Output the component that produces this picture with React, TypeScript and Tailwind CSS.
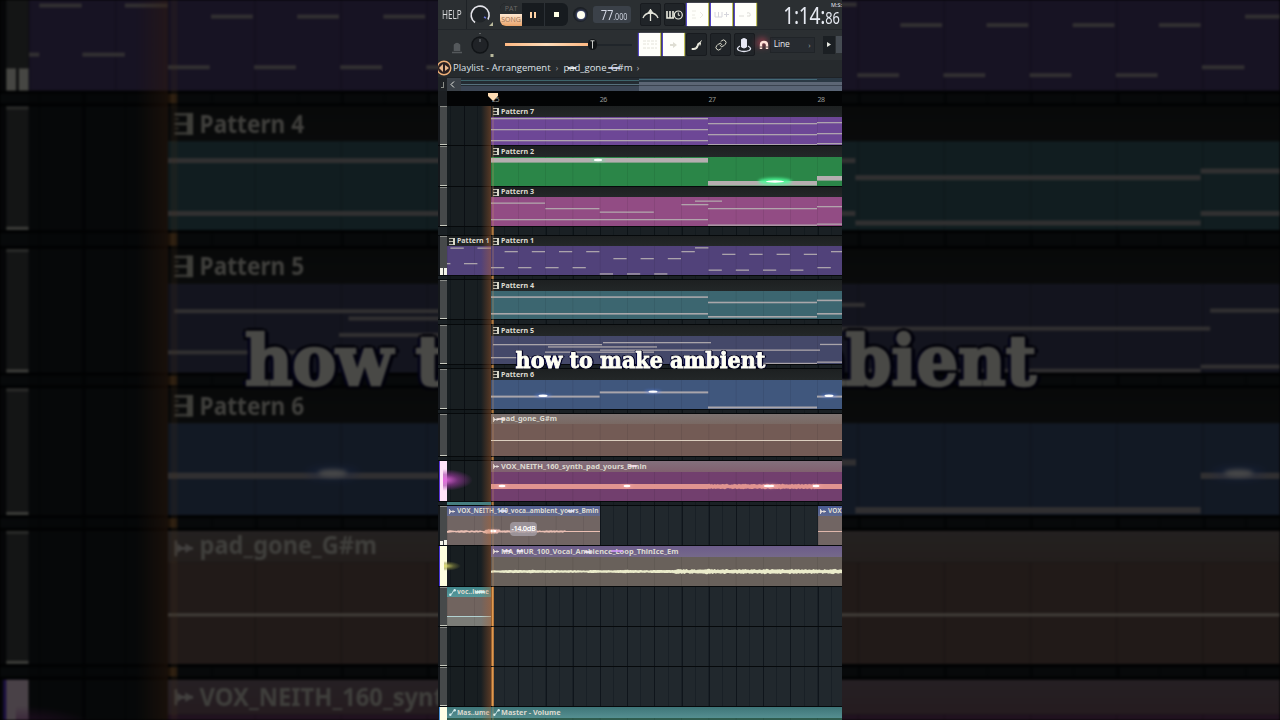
import React from 'react';
import { Link } from 'lucide-react';

type Note = [x: number, y: number, width: number, height?: number];
type Glow = [x: number, y: number, width: number];

interface Clip {
  label: string;
  labelWidth: number;
  kind: 'pattern' | 'audio' | 'automation';
  x: number;
  width: number;
  head: string;
  body: string;
  notes?: Note[];
  noteColor?: string;
  glows?: Glow[];
  glowColor?: string;
  wave?: { y: number; color: string; amp: (x: number) => number };
}

interface Track {
  head: number;
  body: number;
  gap: number;
  clips: Clip[];
  meter?: 'pink' | 'yellow' | 'white' | 'peak' | 'small';
}

const BAR = 108.8;
const STEP = 13.6;
const START = 44;
const REST = 351;

const DARK_HEAD = 'bg-gradient-to-b from-[#1d2021] to-[#232728]';

// Repeats one note every two steps
const run = (from: number, count: number, y: number): Note[] =>
  Array.from({ length: count }, (_, i) => [from + i * STEP * 2, y, STEP - 0.4]);

// Stable noise in 0..1 for the wave forms
const noise = (x: number) => {
  const n = Math.sin(x * 127.1) * 43758.5453;
  return n - Math.floor(n);
};

const pattern = (
  label: string,
  body: string,
  notes: Note[],
  extra: Partial<Clip> = {}
): Clip => ({
  label,
  labelWidth: 33,
  kind: 'pattern',
  x: START,
  width: REST,
  head: DARK_HEAD,
  body,
  notes,
  ...extra,
});

const TRACKS: Track[] = [
  {
    head: 11,
    body: 28,
    gap: 1,
    clips: [
      pattern('Pattern 7', 'bg-[#6d4796]', [
        [0, 1, 217], [0, 12, 217], [0, 23, 217],
        [217, 6, 109], [217, 17, 109], [217, 27, 109],
        [326, 5, 25], [326, 16, 25], [326, 26, 25],
      ]),
    ],
  },
  {
    head: 11,
    body: 29,
    gap: 1,
    clips: [
      pattern(
        'Pattern 2',
        'bg-[#2b8648]',
        [[0, 1, 217, 4.6], [217, 24, 109, 4.6], [326, 19, 25, 4.6]],
        { glows: [[107, 3, 11], [284, 24.5, 24]], glowColor: '#4dff9a' }
      ),
    ],
  },
  {
    head: 10,
    body: 29,
    gap: 10,
    clips: [
      pattern('Pattern 3', 'bg-[#924c84]', [
        [0, 5.5, 54], [54.4, 11, 54], [108.8, 14.5, 54], [0, 22, 217],
        [190.4, 7, 27], [204, 3.5, 27], [217, 11, 109], [217, 27.5, 109],
        [326, 9, 25], [326, 26.5, 25],
      ]),
    ],
  },
  {
    head: 10,
    body: 29,
    gap: 5,
    meter: 'peak',
    clips: [
      pattern(
        'Pattern 1',
        'bg-[#51427a]',
        [[3.4, 1.5, 13.4], [30.4, 1.5, 13.6], [0, 17, 3.4], [17, 17, 13.4]],
        { x: 0, width: 44, labelWidth: 32.5 }
      ),
      pattern('Pattern 1', 'bg-[#51427a]', [
        ...run(0, 4, 21), ...run(13.6, 4, 5),
        ...run(BAR, 3, 27.3), ...run(122.4, 3, 12),
        [190.4, 5, 13.4], [204, 1.2, 13.4],
        ...run(217.6, 4, 23.5), ...run(231.2, 4, 7.7),
        [326.4, 21, 13.4], [340, 5, 12],
      ]),
    ],
  },
  {
    head: 11,
    body: 28,
    gap: 6,
    clips: [
      pattern('Pattern 4', 'bg-[#3c6670]', [
        [0, 5.3, 217, 1.6], [0, 22, 217, 1.6], [217, 10.7, 109, 1.6],
        [217, 25, 109, 1.6], [326, 8.6, 25, 1.6], [326, 22, 25, 1.6],
      ]),
    ],
  },
  {
    head: 11,
    body: 28,
    gap: 5,
    clips: [
      pattern('Pattern 5', 'bg-[#444869]', [
        [2, 8, 109], [112, 6, 108], [57, 10.3, 109], [54, 15.5, 109],
        [109, 13.5, 220], [0, 21, 54], [329, 7.8, 22], [217, 26.8, 109], [326, 25.5, 25],
      ]),
    ],
  },
  {
    head: 11,
    body: 29,
    gap: 5,
    clips: [
      pattern(
        'Pattern 6',
        'bg-[#40577d]',
        [[0, 15.6, 108.6, 2], [108.8, 11.4, 108.4, 2], [217, 26.5, 109, 2], [326, 15.6, 25, 2]],
        { glows: [[52, 15.8, 12], [162, 11.6, 12], [338, 15.8, 12]], glowColor: '#5f8cff' }
      ),
    ],
  },
  {
    head: 10,
    body: 32,
    gap: 5,
    clips: [
      {
        label: 'pad_gone_G#m',
        labelWidth: 56,
        kind: 'audio',
        x: START,
        width: REST,
        head: 'bg-gradient-to-b from-[#7d7371] to-[#796862]',
        body: 'bg-[#735b55]',
        notes: [[0, 16, 351, 1]],
        noteColor: '#e8dccb',
      },
    ],
  },
  {
    head: 11,
    body: 29,
    gap: 5,
    meter: 'pink',
    clips: [
      {
        label: 'VOX_NEITH_160_synth_pad_yours_Bmin',
        labelWidth: 145.5,
        kind: 'audio',
        x: START,
        width: REST,
        head: 'bg-gradient-to-b from-[#83707c] to-[#80606f]',
        body: 'bg-[#723f6e]',
        glows: [[11, 14, 9], [136, 14, 9], [278, 14, 14], [325, 14, 9]],
        glowColor: '#ffb3b8',
        wave: {
          y: 14.5,
          color: '#e09490',
          amp: (x) => (x > 217 && x < 326 ? 1.8 + noise(x) * 1 : 2.6),
        },
      },
    ],
  },
  {
    head: 10,
    body: 29,
    gap: 1,
    meter: 'small',
    clips: [
      {
        label: 'VOX_NEITH_160_voca..ambient_yours_Bmin',
        labelWidth: 141.5,
        kind: 'audio',
        x: 0,
        width: 153,
        head: 'bg-gradient-to-b from-[#525f91] to-[#666b8c]',
        body: 'bg-[#716563]',
        glows: [[46, 15, 9]],
        glowColor: '#ffb3b8',
        wave: {
          y: 15.5,
          color: '#ecc0b4',
          amp: (x) => (x > 118 ? 0.5 : 0.5 + noise(x) * 0.9 + (x > 38 && x < 54 ? 1 : 0)),
        },
      },
      {
        label: 'VOX',
        labelWidth: 13.5,
        kind: 'audio',
        x: 370.5,
        width: 25,
        head: 'bg-gradient-to-b from-[#4a5a92] to-[#5f6a90]',
        body: 'bg-[#716563]',
        notes: [[0, 15, 25, 1]],
        noteColor: '#ecc0b4',
      },
    ],
  },
  {
    head: 11,
    body: 29,
    gap: 1,
    meter: 'yellow',
    clips: [
      {
        label: 'MA_MUR_100_Vocal_Ambience_Loop_ThinIce_Em',
        labelWidth: 177.5,
        kind: 'audio',
        x: START,
        width: REST,
        head: 'bg-gradient-to-b from-[#6c5c8a] to-[#75698a]',
        body: 'bg-[#69615b]',
        wave: {
          y: 14.5,
          color: '#ebeccb',
          amp: (x) => {
            const loud = x > 185;
            return (loud ? 1.1 : 0.8) + noise(x) * (loud ? 1.3 : 0.5) + noise(Math.floor(x / 9)) * 0.5;
          },
        },
      },
    ],
  },
  {
    head: 10,
    body: 29,
    gap: 1,
    clips: [
      {
        label: 'voc..lume',
        labelWidth: 32,
        kind: 'automation',
        x: 0,
        width: 44,
        head: 'bg-gradient-to-b from-[#3f8488] to-[#57989b]',
        body: 'bg-gradient-to-b from-[#71645f] from-66% to-[#7b7c77] to-66%',
        notes: [[0, 19, 44, 1]],
        noteColor: '#b8dcdc',
      },
    ],
  },
  { head: 10, body: 29, gap: 1, clips: [] },
  { head: 10, body: 29, gap: 1, clips: [] },
  {
    head: 11,
    body: 2,
    gap: 0,
    meter: 'white',
    clips: [
      {
        label: 'Mas..ume',
        labelWidth: 32.5,
        kind: 'automation',
        x: 0,
        width: 44,
        head: 'bg-gradient-to-b from-[#3e7578] to-[#558f91]',
        body: 'bg-[#2f5c4e]',
      },
      {
        label: 'Master - Volume',
        labelWidth: 59.5,
        kind: 'automation',
        x: START,
        width: REST,
        head: 'bg-gradient-to-b from-[#3e7578] to-[#558f91]',
        body: 'bg-[#2f5c4e]',
      },
    ],
  },
];

// The first row's header lies above the top edge, so it carries no label
const BACKDROP_TRACKS: Track[] = TRACKS.slice(3, 9).map((track, i) =>
  i === 0 ? { ...track, clips: track.clips.map((clip) => ({ ...clip, label: '' })) } : track
);

// Small bright streaks over the labels: x, y, width, colour
const STREAKS: [number, number, number, string][] = [
  [134, 68, 9, '#ffffff'],
  [176, 68, 12, '#dfe4ff'],
  [63, 419, 8, '#ffe9e4'],
  [195, 466, 8, '#ffe4f2'],
  [65, 511, 8, '#e6e9ff'],
  [133, 511, 7, '#e6e9ff'],
  [69, 551, 8, '#f4ecff'],
  [82, 551, 7, '#f4ecff'],
  [150, 552, 7, '#f4ecff'],
  [179, 551, 12, '#d79bff'],
  [42, 592, 10, '#dcffff'],
];

const ClipIcon: React.FC<{ kind: Clip['kind'] }> = ({ kind }) => {
  if (kind === 'pattern') {
    return (
      <svg className="w-[6px] h-[7px] shrink-0" viewBox="0 0 6 7">
        <path d="M0 .5H5M0 3.5H5M0 6.5H5" stroke="#c9c9bd" strokeWidth=".9" />
        <path d="M0 2H1.5M0 5H1.5" stroke="#8d8d84" strokeWidth=".6" />
        <rect x="4" y="0" width="2" height="7" fill="#d8d8c8" />
      </svg>
    );
  }
  if (kind === 'audio') {
    return (
      <svg className="w-[6px] h-[7px] shrink-0" viewBox="0 0 6 7">
        <path d="M.5 1V6M.5 3.5H6" stroke="#e6e0dc" strokeWidth=".9" />
        <path d="M1 2L3 3.5L1 5ZM3.5 2L6 3.5L3.5 5Z" fill="#e6e0dc" />
      </svg>
    );
  }
  return (
    <svg className="w-[7px] h-[7px] shrink-0 -mr-px" viewBox="0 0 7 7">
      <path d="M1.3 5.7Q3 5.2 3.5 3.5T5.7 1.3" stroke="#d6eeee" fill="none" />
      <circle cx="1.3" cy="5.7" r="1.2" fill="#d6eeee" />
      <circle cx="5.7" cy="1.3" r="1.2" fill="#d6eeee" />
    </svg>
  );
};

const wavePath = (wave: NonNullable<Clip['wave']>, width: number) => {
  const xs = Array.from({ length: Math.floor(width) + 1 }, (_, i) => i);
  const top = xs.map((x) => `${x} ${(wave.y - wave.amp(x)).toFixed(2)}`);
  const bottom = xs.map((x) => `${x} ${(wave.y + wave.amp(x + 2)).toFixed(2)}`).reverse();
  return `M${[...top, ...bottom].join('L')}Z`;
};

const ClipView: React.FC<{ clip: Clip; track: Track; offset: number }> = ({
  clip,
  track,
  offset,
}) => (
  <div className="flex flex-col shrink-0" style={{ marginLeft: offset, width: clip.width }}>
    <div
      className={`flex items-center shrink-0 gap-[2px] pl-[2px] ${clip.head}`}
      style={{ height: track.head }}
    >
      <ClipIcon kind={clip.kind} />
      {clip.label && (
        <svg className="h-[10px] shrink-0 overflow-visible" style={{ width: clip.labelWidth }}>
          <text
            x="0"
            y="7.3"
            textLength={clip.labelWidth}
            lengthAdjust="spacingAndGlyphs"
            className="fill-[#dcdad0] text-[7.8px] font-bold font-['Noto_Sans',sans-serif]"
          >
            {clip.label}
          </text>
        </svg>
      )}
    </div>
    <svg
      className={`block shrink-0 ${clip.body}`}
      style={{ width: clip.width, height: track.body }}
      viewBox={`0 0 ${clip.width} ${track.body}`}
    >
      {Array.from({ length: Math.ceil(clip.width / (STEP * 2)) }, (_, i) => (
        <rect key={i} x={i * STEP * 2} width=".6" height={track.body} fill="#000" opacity=".12" />
      ))}
      {clip.notes?.map(([x, y, w, h = 1.3], i) => (
        <rect
          key={i}
          x={x}
          y={y}
          width={w}
          height={h}
          fill={clip.noteColor ?? '#b5aeb0'}
          opacity={h > 4 ? 1 : 0.9}
        />
      ))}
      {clip.wave && <path d={wavePath(clip.wave, clip.width)} fill={clip.wave.color} />}
      {clip.glows?.map(([x, y, w], i) => (
        <g key={i}>
          <ellipse
            cx={x}
            cy={y}
            rx={w * 0.7}
            ry={w * 0.15}
            fill={clip.glowColor}
            opacity={w > 20 ? 0.9 : 0.45}
            className="blur-[1.5px]"
          />
          <ellipse cx={x} cy={y} rx={w * 0.38} ry="1.2" fill="#fff" className="blur-[0.6px]" />
        </g>
      ))}
    </svg>
  </div>
);

const Meter: React.FC<{ kind?: Track['meter'] }> = ({ kind }) => {
  if (kind === 'pink') {
    return (
      <div className="relative w-[7px] ml-px h-full bg-[#ffe3f7] shadow-[-1px_0_0_#5a35d8]">
        <div className="absolute left-[3px] top-[8px] w-[30px] h-[22px] bg-[radial-gradient(ellipse_at_left,#e86be0_0%,#a53ba899_35%,transparent_70%)]" />
      </div>
    );
  }
  if (kind === 'yellow') {
    return (
      <div className="relative w-[7px] ml-px h-full bg-[#ffffdf] shadow-[-1px_0_0_#4a35d8]">
        <div className="absolute left-[4px] inset-y-0 my-auto w-[17px] h-[10px] bg-[radial-gradient(ellipse_at_left,#e0e06e_0%,#8c8d4088_40%,transparent_70%)]" />
      </div>
    );
  }
  if (kind === 'white') {
    return <div className="w-[7px] ml-px h-full bg-[#ffffe6] shadow-[-1px_0_0_#4a8fd8]" />;
  }
  return (
    <div className="flex flex-col justify-between w-[7px] ml-px h-full bg-[#46494a]">
      <div className="h-px bg-[#8a8c88]" />
      {kind ? (
        <div className="flex items-end gap-px">
          <div className={`w-[3px] bg-[#f4f4e8] ${kind === 'peak' ? 'h-[7px]' : 'h-[4px]'}`} />
          <div className={`w-[3px] bg-[#f4f4e8] ${kind === 'peak' ? 'h-[7px]' : 'h-[5px]'}`} />
        </div>
      ) : (
        <div className="h-px bg-[#c9cbc0]" />
      )}
    </div>
  );
};

const TrackRow: React.FC<{ track: Track }> = ({ track }) => {
  const height = track.head + track.body;
  let end = 0;
  return (
    <div className="shrink-0">
      <div className="flex" style={{ height }}>
        <div className="relative w-[9px] pl-px shrink-0 bg-[#15181c]">
          <Meter kind={track.meter} />
        </div>
        <div className="flex">
          {track.clips.map((clip) => {
            const offset = clip.x - end;
            end = clip.x + clip.width;
            return <ClipView key={clip.x} clip={clip} track={track} offset={offset} />;
          })}
        </div>
      </div>
      {track.gap > 1 ? (
        <div
          className="border-y border-[#06090b] bg-[#0b0f12]/30"
          style={{ height: track.gap }}
        />
      ) : (
        <div className="bg-[#06090b]" style={{ height: track.gap }} />
      )}
    </div>
  );
};

const Arrangement: React.FC<{ tracks: Track[] }> = ({ tracks }) => (
  <div className="relative flex flex-col w-[404px] overflow-hidden bg-[#21282d]">
    <div className="absolute inset-y-0 left-[12.2px] right-0 bg-[repeating-linear-gradient(90deg,#192026_0,#192026_1px,transparent_1px,transparent_13.6px)]" />
    <div className="absolute inset-y-0 left-[25.8px] right-0 bg-[repeating-linear-gradient(90deg,#0f151b_0,#0f151b_1px,transparent_1px,transparent_27.2px)]" />
    <div className="absolute inset-y-0 left-[9px] w-[44px] bg-black/25" />
    <div className="absolute inset-y-0 left-[53px] w-[3px] bg-gradient-to-r from-[#7a4a22] via-[#e0984c] to-[#8f5c2c]" />
    <div className="relative flex flex-col">
      {tracks.map((track, i) => (
        <TrackRow key={i} track={track} />
      ))}
    </div>
    {/* Playhead trail */}
    <div className="absolute inset-y-0 left-[43px] w-[10px] bg-gradient-to-r from-transparent to-[#b8622c]/40" />
    <div className="absolute inset-y-0 left-[54px] w-[2px] bg-[#e0a060]/20" />
  </div>
);

const Caption: React.FC = () => (
  <p className="relative -top-[0.5px] whitespace-nowrap leading-none font-bold text-[22px] text-[#fffff4] origin-center scale-x-[1.045] font-['DejaVu_Serif_Condensed','DejaVu_Serif',serif] [font-stretch:condensed] [-webkit-text-stroke:0.8px_#fffff4] [text-shadow:1px_0_#05052a,-1.3px_0_#0a0a50,0_1.3px_#05051c,0_-1.3px_#05051c,1px_1px_#05051c,-1px_1px_#05051c,1px_-1px_#05051c,-1px_-1px_#05051c,1.6px_0_#05052a]">
    how to make ambient
  </p>
);

const ToolButton: React.FC<{ lit?: boolean; children?: React.ReactNode }> = ({ lit, children }) => (
  <div
    className={`flex items-center justify-center w-[21px] h-[23px] shrink-0 ${
      lit
        ? 'bg-[#fffffb] shadow-[-1px_0_1px_#5548c8,1px_0_1px_#c4c25a]'
        : 'bg-[#202428] border border-[#181b1f] rounded-[2px]'
    }`}
  >
    {children}
  </div>
);

const Toolbar: React.FC = () => (
  <div className="flex flex-col h-[60px] shrink-0 bg-[#2b2f32] text-[#dadbdc] font-['Open_Sans','Noto_Sans',sans-serif]">
    <div className="flex items-center h-[30px] border-b border-[#22262a] overflow-hidden">
      <div className="flex items-center w-[29px] h-full pl-[4px] border-r border-[#1e2226]">
        <span className="text-[12px] leading-none origin-left scale-x-[.68] font-medium">HELP</span>
      </div>
      <svg className="w-[28px] h-[28px] ml-[2px]" viewBox="0 0 28 28">
        <circle cx="11" cy="14" r="7.5" fill="#202428" />
        <path d="M6 21.5A9 9 0 1 1 19 18.5" stroke="#e4e4ea" strokeWidth="1.6" fill="none" />
        <path d="M15 16L17 17" stroke="#6a74d8" strokeWidth="1.5" />
        <path d="M24 21V25H20Z" fill="#b9b99c" />
      </svg>
      <div className="flex items-center h-[23px] ml-[3px] rounded-[6px] overflow-hidden bg-[#171b1f]">
        <div className="flex flex-col w-[22px] h-full text-center">
          <span className="h-[11px] text-[7px] leading-[11px] bg-[#2a2e31] text-[#6b6a67]">PAT</span>
          <span className="h-[12px] text-[7px] leading-[11px] bg-gradient-to-b from-[#ffe9d2] to-[#e8a268] text-[#9a7356]">
            SONG
          </span>
        </div>
        <div className="flex items-center justify-center gap-[2px] w-[23px] h-full border-r border-[#2b3035]">
          <div className="w-[2px] h-[6px] bg-[#ffd3a4]" />
          <div className="w-[2px] h-[6px] bg-[#ffd3a4]" />
        </div>
        <div className="flex items-center justify-center w-[23px] h-full">
          <div className="w-[5px] h-[5px] bg-[#ffffe6]" />
        </div>
      </div>
      <div className="flex items-center justify-center w-[15px] h-[15px] ml-[5px] rounded-full bg-[#1b1f24]">
        <div className="w-[8px] h-[8px] rounded-full bg-[#fffff0] shadow-[0_0_3px_#8f9cff]" />
      </div>
      <div className="flex items-baseline justify-end w-[38px] h-[17px] ml-[5px] pr-[4px] rounded-[3px] bg-[#3b4149] text-[#d5dae6]">
        <div className="flex items-baseline origin-right scale-x-[.8]">
          <span className="text-[14px] leading-[17px] tracking-[-0.2px]">77</span>
          <span className="text-[9px] leading-none">.000</span>
        </div>
      </div>
      <div className="flex items-center gap-[2.7px] ml-[9px]">
        <ToolButton>
          <svg className="w-[17px] h-[14px]" viewBox="0 0 17 14" stroke="#e4e4da" fill="none">
            <path d="M8.5 1V13M1 10Q3 5 8.5 5T16 10" strokeWidth="1.3" />
            <path d="M6 5L8.5 1.5L11 5Z" fill="#e4e4da" />
          </svg>
        </ToolButton>
        <ToolButton>
          <svg className="w-[17px] h-[12px]" viewBox="0 0 17 12" stroke="#e8e8dc" fill="none">
            <path d="M1 2V9H8M4 2V9M7 2V9" strokeWidth="1.6" />
            <circle cx="12.3" cy="6" r="4" strokeWidth="1.2" />
            <path d="M12.3 3.5V6.3H14" />
          </svg>
        </ToolButton>
        <ToolButton lit>
          <svg className="w-[14px] h-[10px]" viewBox="0 0 14 10" stroke="#ebeae2" fill="none">
            <path d="M1 1H5M1 5H4M1 8H5M9 2L12 5L9 8" />
          </svg>
        </ToolButton>
        <ToolButton lit>
          <svg className="w-[15px] h-[8px]" viewBox="0 0 15 8" stroke="#d6d6dc" fill="none">
            <path d="M1 1V6H8V1M4.5 1V6M10 3.5H15M12.5 1V6" />
          </svg>
        </ToolButton>
        <ToolButton lit>
          <svg className="w-[14px] h-[8px]" viewBox="0 0 14 8" stroke="#dddcd6" fill="none">
            <path d="M1 5H6M9 2Q13 1 12 5H9" />
          </svg>
        </ToolButton>
      </div>
      <div className="relative flex items-baseline w-[60px] ml-auto pr-[2px] justify-end whitespace-nowrap text-[#e6eaf2] font-['Noto_Sans',sans-serif]">
        <div className="flex items-baseline shrink-0 origin-right scale-x-[.8]">
          <span className="text-[24px] leading-[29px] tracking-[-0.3px]">1:14:</span>
          <span className="text-[16px] leading-none">86</span>
        </div>
        <span className="absolute top-[3px] right-0 text-[5.5px] leading-none">M:S:</span>
      </div>
    </div>

    <div className="flex items-center h-[30px] pb-px overflow-hidden">
      <svg className="w-[26px] h-[20px] ml-[6px]" viewBox="0 0 26 20">
        <path d="M10.500 16V10Q13 7 15.500 10V16M8 17.500H18" stroke="#55595c" strokeWidth="1.500" fill="#55595c" />
      </svg>
      <svg className="w-[26px] h-[28px] ml-px" viewBox="0 0 26 28">
        <circle cx="9" cy="14" r="8" fill="#202327" stroke="#111417" strokeWidth="1.5" />
        <path d="M9 8V11" stroke="#777c80" />
        <rect x="19.500" y="23" width="3" height="3" fill="#b9b99c" />
        <rect x="8.500" y="2" width="1" height="1" fill="#9a9d9a" />
      </svg>
      <div className="flex items-center w-[127px] ml-[8px]">
        <div className="w-[83px] h-[3px] bg-gradient-to-r from-[#ffb983] via-[#ffdcb8] to-[#ffb983]" />
        <div className="flex items-center justify-center w-[9px] h-[11px] rounded-full bg-[#111417]">
          <svg className="w-[5px] h-[9px]" viewBox="0 0 5 9">
            <path d="M.5 .8H4.500M2.500 1V8.500" stroke="#c8cbc8" />
          </svg>
        </div>
        <div className="w-[35px] h-[2px] bg-[#20252a]" />
      </div>
      <div className="flex items-center gap-[2.7px] ml-[7px]">
        <ToolButton lit>
          <svg className="w-[16px] h-[9px]" viewBox="0 0 16 9" stroke="#e4e3da" fill="none">
            <path d="M1 1H15M1 4H7M9 4H15M1 8H15" strokeDasharray="3 1" />
          </svg>
        </ToolButton>
        <ToolButton lit>
          <svg className="w-[10px] h-[8px]" viewBox="0 0 10 8" fill="#dfded3">
            <path d="M2 3H5V1L9 4L5 7V5H2Z" />
          </svg>
        </ToolButton>
        <ToolButton>
          <svg className="w-[12px] h-[12px]" viewBox="0 0 12 12" fill="none" stroke="#e8e8dc">
            <path d="M1.500 10Q5.500 10.500 6.500 7Q7 4.500 9 4" strokeWidth="2" strokeLinecap="round" />
            <path d="M9 3.500L10.500 1.500M9.500 4L9 6.500" />
          </svg>
        </ToolButton>
        <ToolButton>
          <Link className="w-[12px] h-[12px] text-[#dcdccd]" />
        </ToolButton>
        <ToolButton>
          <svg className="w-[16px] h-[16px]" viewBox="0 0 16 16" fill="none" stroke="#e4e6f2">
            <path d="M5.500 10V2.500Q8 .5 10.500 2.500V10Q8 12 5.500 10Z" fill="#e9eaf5" />
            <path d="M4 9Q-.5 11.500 3 13.500Q8 15.500 13 13.500Q16.500 11.500 12 9" strokeWidth="1.3" />
          </svg>
        </ToolButton>
      </div>
      <svg
        className="w-[10px] h-[10px] ml-[4px] shrink-0 drop-shadow-[-2px_-2px_3px_#e0445c]"
        viewBox="0 0 10 10"
        fill="none"
      >
        <path d="M2 9V5Q2 2 5 2T8 5V9" stroke="#ffe1d8" strokeWidth="2.4" />
        <path d="M.8 7H3.200M6.800 7H9.200" stroke="#3a2a2e" strokeWidth=".8" />
      </svg>
      <div className="flex items-center justify-between w-[45px] h-[16px] ml-px px-[3px] shrink-0 border border-[#202428] bg-[#272b30]">
        <span className="text-[8.5px] leading-none tracking-[-0.2px] font-medium text-[#e6e7ea]">Line</span>
        <span className="text-[8px] leading-none text-[#9a9d9f]">›</span>
      </div>
      <div className="flex items-center justify-center w-[12px] h-[18px] ml-[8px] shrink-0 bg-[#1b1f23]">
        <svg className="w-[4px] h-[5px]" viewBox="0 0 4 5">
          <path d="M0 0L4 2.500L0 5Z" fill="#e6e7e0" />
        </svg>
      </div>
      <div className="w-[6px] h-[17px] ml-px shrink-0 bg-[#454b52]" />
    </div>
  </div>
);

const TitleBar: React.FC = () => (
  <div className="flex items-center h-[17px] pb-[2px] shrink-0 bg-[#262a2d] text-[#dfe2e8] font-['Open_Sans','Noto_Sans',sans-serif] font-medium text-[9.5px] leading-none whitespace-nowrap">
    <svg className="w-[16px] h-[16px] -ml-[2px] shrink-0" viewBox="0 0 16 16">
      <circle cx="8" cy="8" r="6.800" fill="#2b2020" stroke="#eeb078" strokeWidth="1.400" />
      <path d="M3 8L7 4V12ZM9 5L13 8L9 11Z" fill="#e9b88e" />
    </svg>
    <span className="ml-[1px]">Playlist - Arrangement</span>
    <span className="mx-[5px] text-[#8d9196]">›</span>
    <span>pad_gone_G#m</span>
    <span className="ml-[4px] text-[#a6a9ac]">›</span>
  </div>
);

const Scroller: React.FC = () => (
  <div className="flex items-end h-[14px] shrink-0 bg-[#1e2226]">
    <div className="flex items-center justify-center w-[9px] h-[13px]">
      <div className="w-[3px] h-[6px] border-r border-b border-[#8a8d88]" />
    </div>
    <div className="flex items-center justify-center w-[14px] h-[13px] pr-[3px] bg-[#3b4148]">
      <svg className="w-[5px] h-[7px]" viewBox="0 0 5 7">
        <path d="M4 .5L1 3.500L4 6.500" stroke="#e6e7e0" fill="none" />
      </svg>
    </div>
    <div className="flex flex-1 h-[13px]">
      <div className="flex flex-col w-[178px] pt-[2px] bg-[#242b32]">
        <div className="h-px bg-[#3e656b]" />
        <div className="mt-[3px] h-px bg-[#56707c]" />
        <div className="mt-px flex-1 bg-[#3c4655]" />
      </div>
      <div className="flex flex-col flex-1 pt-px bg-[#2b3945]">
        <div className="w-[178px] h-px bg-[#456a78]" />
        <div className="mt-[2px] h-[3px] bg-[#5c6675]" />
        <div className="flex-1 border-t border-[#3a4350] bg-[#596475]" />
      </div>
    </div>
  </div>
);

const Ruler: React.FC = () => (
  <div className="flex items-center h-[15px] shrink-0 bg-[#030405] text-[#9a9c9a] text-[7px] leading-none tracking-[-0.5px] font-['Noto_Sans',sans-serif]">
    <div className="w-[9px] h-full bg-[#1c1f22]" />
    <div className="relative w-[44px]">
      <svg className="absolute z-10 -right-[8px] -top-[6px] w-[12px] h-[9px]" viewBox="0 0 12 9">
        <path d="M1 0H11V3L6 8L1 3Z" fill="#ffdcb3" />
      </svg>
    </div>
    <span className="w-[108.8px] pt-px pl-px">25</span>
    <span className="w-[108.8px] pt-px">26</span>
    <span className="w-[108.8px] pt-px">27</span>
    <span className="pt-px">28</span>
  </div>
);

export default function App() {
  return (
    <div className="relative flex justify-center w-[1280px] h-[720px] overflow-hidden bg-black">
      {/* Enlarged, dimmed copy behind the phone frame */}
      <div className="absolute inset-0 overflow-hidden opacity-[.29] blur-[1px]" aria-hidden="true">
        <div className="absolute left-0 -top-[33px] origin-top-left scale-[3.168]">
          <Arrangement tracks={BACKDROP_TRACKS} />
        </div>
        <div className="absolute inset-0 flex items-center justify-center">
          <div className="scale-[3.168]">
            <Caption />
          </div>
        </div>
      </div>

      <div className="relative flex flex-col w-[404px] h-[720px] overflow-hidden bg-[#1e2226]">
        <Toolbar />
        <TitleBar />
        <Scroller />
        <Ruler />
        <Arrangement tracks={TRACKS} />
        <div className="absolute left-[9px] top-[502px] w-[44px] h-[3px] bg-[#467e80]" />
        {STREAKS.map(([x, y, w, color]) => (
          <div
            key={`${x}-${y}`}
            className="absolute h-[2px] -translate-x-1/2 -translate-y-1/2 rounded-full opacity-80 blur-[0.7px]"
            style={{ left: x, top: y, width: w, backgroundColor: color }}
          />
        ))}
        <div className="absolute left-[72px] top-[522px] flex items-center justify-center w-[27px] h-[14px] rounded-[4px] bg-[#a9a3ab]/75 text-[7.5px] leading-none font-semibold text-white font-['Noto_Sans',sans-serif] tracking-[-0.4px]">
          -14.0dB
        </div>
        <div className="absolute inset-0 flex items-center justify-center">
          <Caption />
        </div>
      </div>
    </div>
  );
}
